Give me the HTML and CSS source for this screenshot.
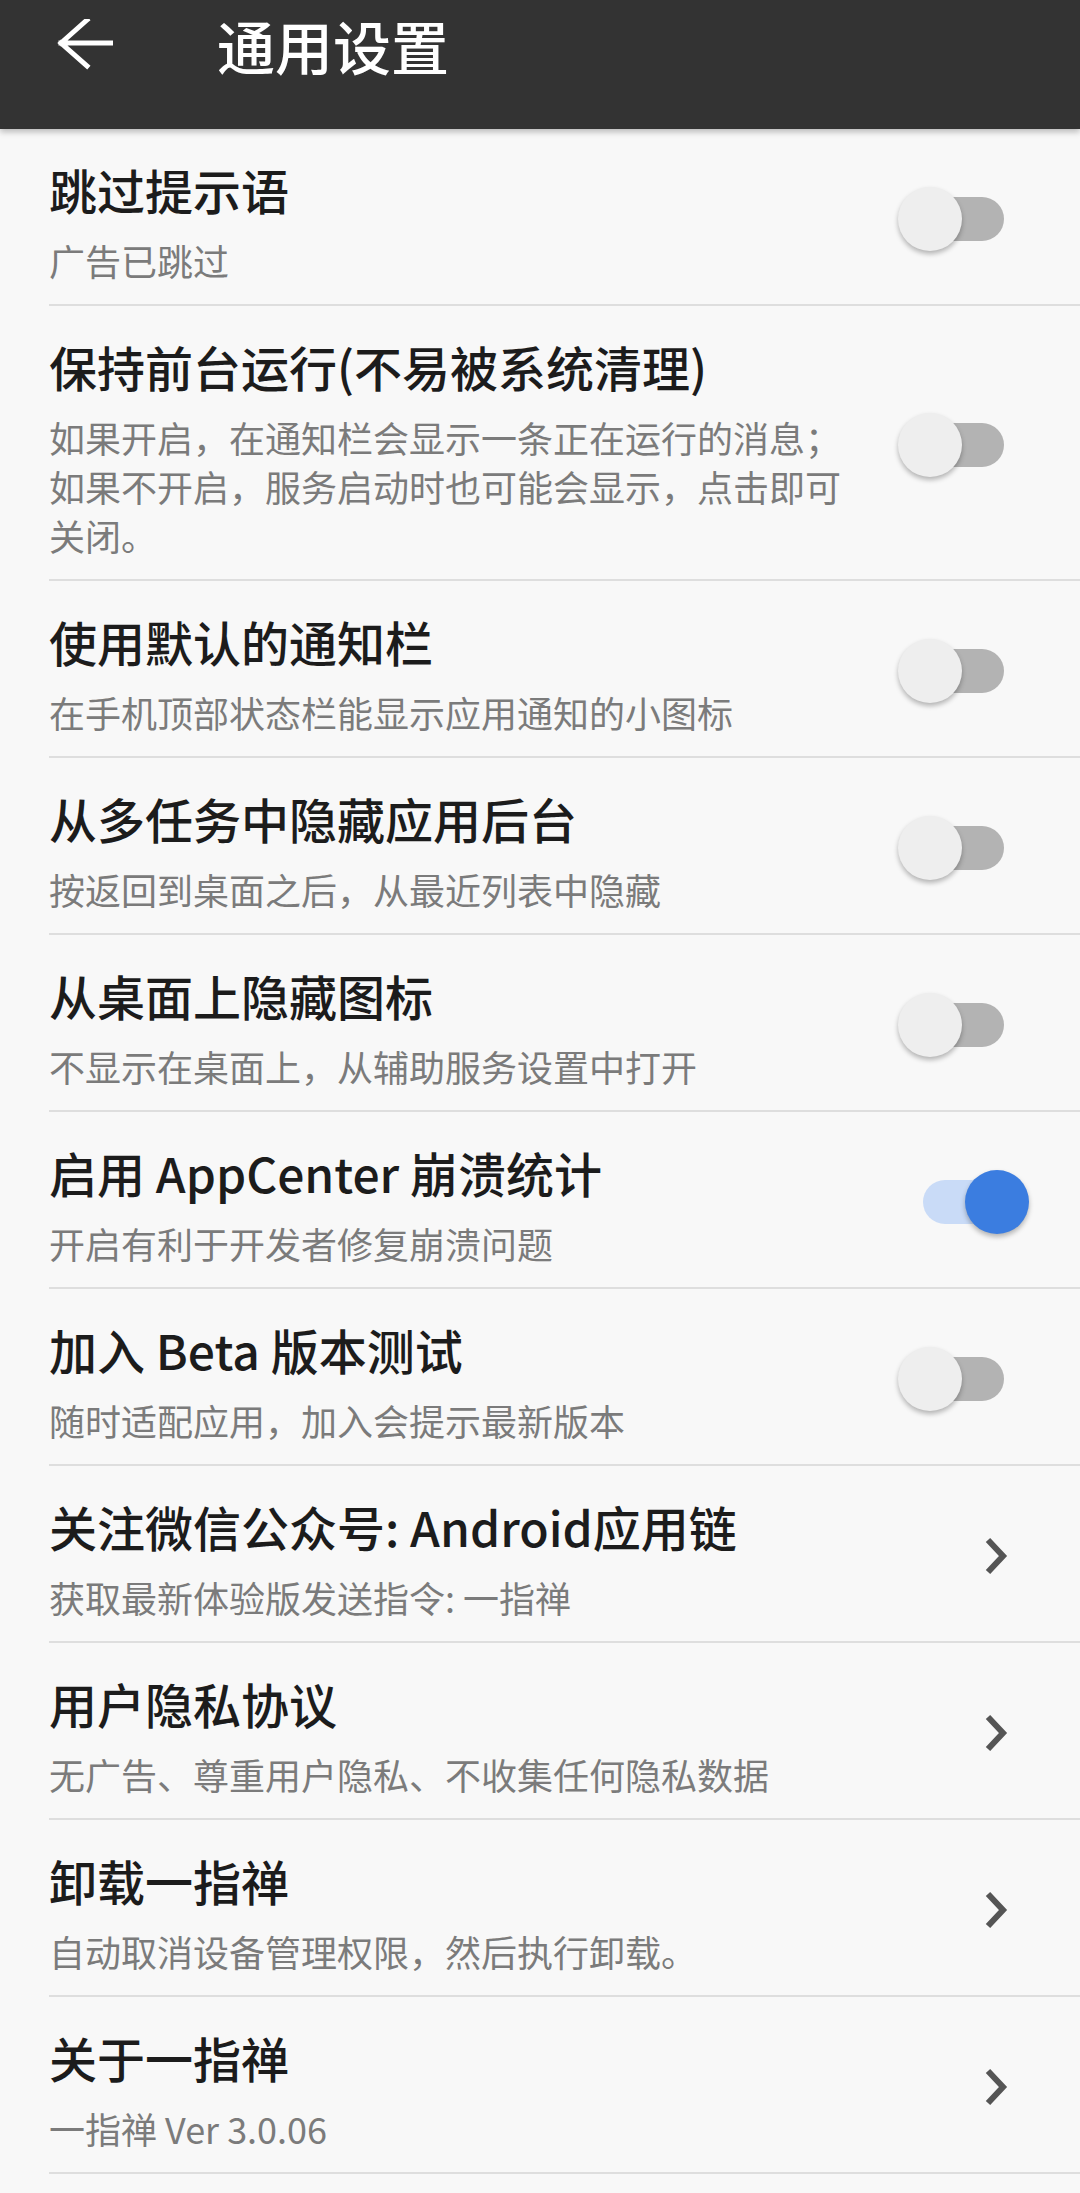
FILE: index.html
```html
<!DOCTYPE html>
<html lang="zh-CN">

<head>
    <meta charset="UTF-8">
    <meta name="viewport" content="width=device-width, initial-scale=1.0">
    <title>通用设置</title>
    <link rel="stylesheet" href="styles.css">
</head>

<body>

    <header class="toolbar">
        <svg class="back-icon" width="56" height="52" viewBox="0 0 56 52">
            <path d="M4 24 H54 M4 24 L30 1 M4 24 L30 47" fill="none" stroke="#fff" stroke-width="5" stroke-linecap="square" />
        </svg>
        <h1 class="toolbar-title">通用设置</h1>
    </header>

    <ul class="settings">
        <li class="item">
            <div class="item-text">
                <div class="item-title">跳过提示语</div>
                <div class="item-sub">广告已跳过</div>
            </div>
            <span class="switch"></span>
        </li>
        <li class="item">
            <div class="item-text">
                <div class="item-title">保持前台运行(不易被系统清理)</div>
                <div class="item-sub">如果开启，在通知栏会显示一条正在运行的消息；如果不开启，服务启动时也可能会显示，点击即可关闭。</div>
            </div>
            <span class="switch"></span>
        </li>
        <li class="item">
            <div class="item-text">
                <div class="item-title">使用默认的通知栏</div>
                <div class="item-sub">在手机顶部状态栏能显示应用通知的小图标</div>
            </div>
            <span class="switch"></span>
        </li>
        <li class="item">
            <div class="item-text">
                <div class="item-title">从多任务中隐藏应用后台</div>
                <div class="item-sub">按返回到桌面之后，从最近列表中隐藏</div>
            </div>
            <span class="switch"></span>
        </li>
        <li class="item">
            <div class="item-text">
                <div class="item-title">从桌面上隐藏图标</div>
                <div class="item-sub">不显示在桌面上，从辅助服务设置中打开</div>
            </div>
            <span class="switch"></span>
        </li>
        <li class="item">
            <div class="item-text">
                <div class="item-title">启用 AppCenter 崩溃统计</div>
                <div class="item-sub">开启有利于开发者修复崩溃问题</div>
            </div>
            <span class="switch on"></span>
        </li>
        <li class="item">
            <div class="item-text">
                <div class="item-title">加入 Beta 版本测试</div>
                <div class="item-sub">随时适配应用，加入会提示最新版本</div>
            </div>
            <span class="switch"></span>
        </li>
        <li class="item">
            <div class="item-text">
                <div class="item-title">关注微信公众号: Android应用链</div>
                <div class="item-sub">获取最新体验版发送指令: 一指禅</div>
            </div>
            <svg class="chevron" width="24" height="38" viewBox="0 0 24 38">
                <polyline points="4,3 19,19 4,35" fill="none" stroke="#555" stroke-width="6" />
            </svg>
        </li>
        <li class="item">
            <div class="item-text">
                <div class="item-title">用户隐私协议</div>
                <div class="item-sub">无广告、尊重用户隐私、不收集任何隐私数据</div>
            </div>
            <svg class="chevron" width="24" height="38" viewBox="0 0 24 38">
                <polyline points="4,3 19,19 4,35" fill="none" stroke="#555" stroke-width="6" />
            </svg>
        </li>
        <li class="item">
            <div class="item-text">
                <div class="item-title">卸载一指禅</div>
                <div class="item-sub">自动取消设备管理权限，然后执行卸载。</div>
            </div>
            <svg class="chevron" width="24" height="38" viewBox="0 0 24 38">
                <polyline points="4,3 19,19 4,35" fill="none" stroke="#555" stroke-width="6" />
            </svg>
        </li>
        <li class="item">
            <div class="item-text">
                <div class="item-title">关于一指禅</div>
                <div class="item-sub">一指禅 Ver 3.0.06</div>
            </div>
            <svg class="chevron" width="24" height="38" viewBox="0 0 24 38">
                <polyline points="4,3 19,19 4,35" fill="none" stroke="#555" stroke-width="6" />
            </svg>
        </li>
    </ul>

</body>

</html>
```

FILE: styles.css
```css
/* General */
* {
    margin: 0;
    padding: 0;
    box-sizing: border-box;
}

body {
    width: 1080px;
    min-height: 2193px;
    background-color: #f8f8f8;
    font-family: "Noto Sans CJK SC", "Noto Sans", sans-serif;
    color: #1c1c1c;
}

/* Top bar */
.toolbar {
    display: flex;
    align-items: flex-start;
    height: 129px;
    padding: 10px 0 0 57px;
    background-color: #333333;
    box-shadow: 0 3px 6px rgba(0, 0, 0, 0.25);
    position: relative;
    z-index: 1;
}

.back-icon {
    margin-top: 9px;
}

.toolbar-title {
    margin-left: 104px;
    font-size: 58px;
    line-height: 70px;
    font-weight: 500;
    color: #ffffff;
}

/* Settings list */
.settings {
    list-style: none;
}

.item {
    display: flex;
    align-items: center;
    margin-left: 49px;
    padding: 30px 0 19px;
    border-bottom: 2px solid #dedede;
}

.item-text {
    width: 800px;
}

.item-title {
    font-size: 48px;
    line-height: 60px;
    font-weight: 500;
    color: #1c1c1c;
}

.item-sub {
    margin-top: 17px;
    font-size: 36px;
    line-height: 49px;
    color: #7b7b7b;
}

/* Toggle switch */
.switch {
    position: relative;
    width: 96px;
    height: 44px;
    margin: 0 76px 6px auto;
    border-radius: 22px;
    background-color: #b3b3b3;
}

.switch::after {
    content: "";
    position: absolute;
    top: -10px;
    left: -10px;
    width: 64px;
    height: 64px;
    border-radius: 50%;
    background-color: #eeeeee;
    box-shadow: 0 3px 5px rgba(0, 0, 0, 0.28);
}

.switch.on {
    margin-right: 61px;
    background-color: #c9dbf7;
}

.switch.on::after {
    left: 42px;
    background-color: #3b7de0;
}

/* Arrow on link rows */
.chevron {
    margin: 0 72px 6px auto;
}
```
